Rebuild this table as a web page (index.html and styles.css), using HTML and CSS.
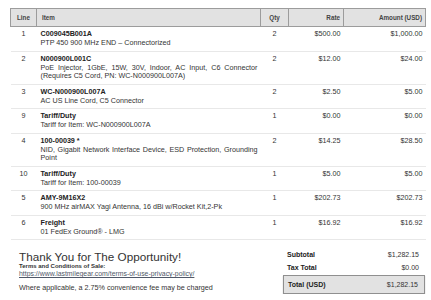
FILE: index.html
```html
<!DOCTYPE html>
<html>
<head>
<meta charset="utf-8">
<link rel="stylesheet" href="styles.css">
</head>
<body>
<div class="page">
  <table class="items">
    <colgroup>
      <col class="c-line"><col class="c-item"><col class="c-qty"><col class="c-rate"><col class="c-amt">
    </colgroup>
    <thead>
      <tr>
        <th class="center">Line</th>
        <th class="left">Item</th>
        <th class="center">Qty</th>
        <th class="right">Rate</th>
        <th class="right">Amount (USD)</th>
      </tr>
    </thead>
    <tbody>
      <tr>
        <td class="center">1</td>
        <td class="item"><div class="code">C009045B001A</div><div class="desc">PTP 450 900 MHz END – Connectorized</div></td>
        <td class="center">2</td><td class="right">$500.00</td><td class="right">$1,000.00</td>
      </tr>
      <tr>
        <td class="center">2</td>
        <td class="item"><div class="code">N000900L001C</div><div class="desc">PoE Injector, 1GbE, 15W, 30V, Indoor, AC Input, C6 Connector (Requires C5 Cord, PN: WC-N000900L007A)</div></td>
        <td class="center">2</td><td class="right">$12.00</td><td class="right">$24.00</td>
      </tr>
      <tr>
        <td class="center">3</td>
        <td class="item"><div class="code">WC-N000900L007A</div><div class="desc">AC US Line Cord, C5 Connector</div></td>
        <td class="center">2</td><td class="right">$2.50</td><td class="right">$5.00</td>
      </tr>
      <tr>
        <td class="center">9</td>
        <td class="item"><div class="code">Tariff/Duty</div><div class="desc">Tariff for Item: WC-N000900L007A</div></td>
        <td class="center">1</td><td class="right">$0.00</td><td class="right">$0.00</td>
      </tr>
      <tr>
        <td class="center">4</td>
        <td class="item"><div class="code">100-00039 *</div><div class="desc">NID, Gigabit Network Interface Device, ESD Protection, Grounding Point</div></td>
        <td class="center">2</td><td class="right">$14.25</td><td class="right">$28.50</td>
      </tr>
      <tr>
        <td class="center">10</td>
        <td class="item"><div class="code">Tariff/Duty</div><div class="desc">Tariff for Item: 100-00039</div></td>
        <td class="center">1</td><td class="right">$5.00</td><td class="right">$5.00</td>
      </tr>
      <tr>
        <td class="center">5</td>
        <td class="item"><div class="code">AMY-9M16X2</div><div class="desc">900 MHz airMAX Yagi Antenna, 16 dBi w/Rocket Kit,2-Pk</div></td>
        <td class="center">1</td><td class="right">$202.73</td><td class="right">$202.73</td>
      </tr>
      <tr>
        <td class="center">6</td>
        <td class="item"><div class="code">Freight</div><div class="desc">01 FedEx Ground® - LMG</div></td>
        <td class="center">1</td><td class="right">$16.92</td><td class="right">$16.92</td>
      </tr>
    </tbody>
  </table>

  <div class="bottom">
    <div class="notes">
      <h1 class="thanks">Thank You for The Opportunity!</h1>
      <div class="terms-title">Terms and Conditions of Sale:</div>
      <a class="terms-link" href="#">https://www.lastmilegear.com/terms-of-use-privacy-policy/</a>
      <p class="fee">Where applicable, a 2.75% convenience fee may be charged</p>
    </div>
    <div class="totals">
      <div class="trow"><span class="tlabel">Subtotal</span><span>$1,282.15</span></div>
      <div class="trow"><span class="tlabel">Tax Total</span><span>$0.00</span></div>
      <div class="trow grand"><span class="tlabel">Total (USD)</span><span>$1,282.15</span></div>
    </div>
  </div>
</div>
</body>
</html>
```

FILE: styles.css
```css
html, body {
  margin: 0;
  padding: 0;
  background: #ffffff;
}
body {
  font-family: "Liberation Sans", Arial, sans-serif;
  color: #333333;
}
.page {
  width: 415px;
  padding: 8px 0 0 10px;
}
.items {
  width: 415px;
  border-collapse: collapse;
  table-layout: fixed;
  font-size: 7.2px;
}
.c-line { width: 26px; }
.c-item { width: 224px; }
.c-qty { width: 28px; }
.c-rate { width: 55px; }
.c-amt { width: 82px; }
.items th {
  background: #e2e2e2;
  border: 1px solid #9c9c9c;
  font-size: 6.3px;
  font-weight: bold;
  color: #444444;
  height: 17px;
  padding: 0 3px;
}
.items th.left { padding-left: 5px; }
.items td {
  vertical-align: top;
  padding: 2px 3px 3px 3px;
  border-bottom: 1px solid #e8e8e8;
  line-height: 10px;
}
.center { text-align: center; }
.left { text-align: left; }
.right { text-align: right; }
.items td.item {
  padding-left: 4px;
  padding-right: 3px;
}
.code {
  font-weight: bold;
  color: #222222;
  line-height: 10px;
}
.desc {
  text-align: justify;
  line-height: 8.5px;
}
.bottom {
  display: flex;
  justify-content: space-between;
  align-items: flex-start;
}
.notes {
  padding: 11px 0 0 9px;
}
.thanks {
  margin: 0;
  font-size: 11.7px;
  font-weight: normal;
  color: #333333;
  line-height: 12px;
}
.terms-title {
  margin-top: 0;
  font-size: 6px;
  font-weight: bold;
  line-height: 7px;
  color: #333;
}
.terms-link {
  display: block;
  font-size: 6.9px;
  line-height: 7px;
  color: #4f5868;
}
.fee {
  margin: 5.5px 0 0 0;
  font-size: 7.2px;
  line-height: 9px;
}
.totals {
  width: 142px;
  margin-top: 7.5px;
  font-size: 7px;
}
.trow {
  display: flex;
  justify-content: space-between;
  padding: 0 6px 0 4px;
  height: 13px;
  line-height: 13px;
}
.tlabel {
  font-weight: bold;
  color: #222;
}
.trow.grand {
  margin-top: 1.5px;
  height: 17px;
  line-height: 17px;
  background: #e2e2e2;
  border: 1px solid #8f8f8f;
  box-shadow: 0 1px 1px #b5b5b5;
}
```
